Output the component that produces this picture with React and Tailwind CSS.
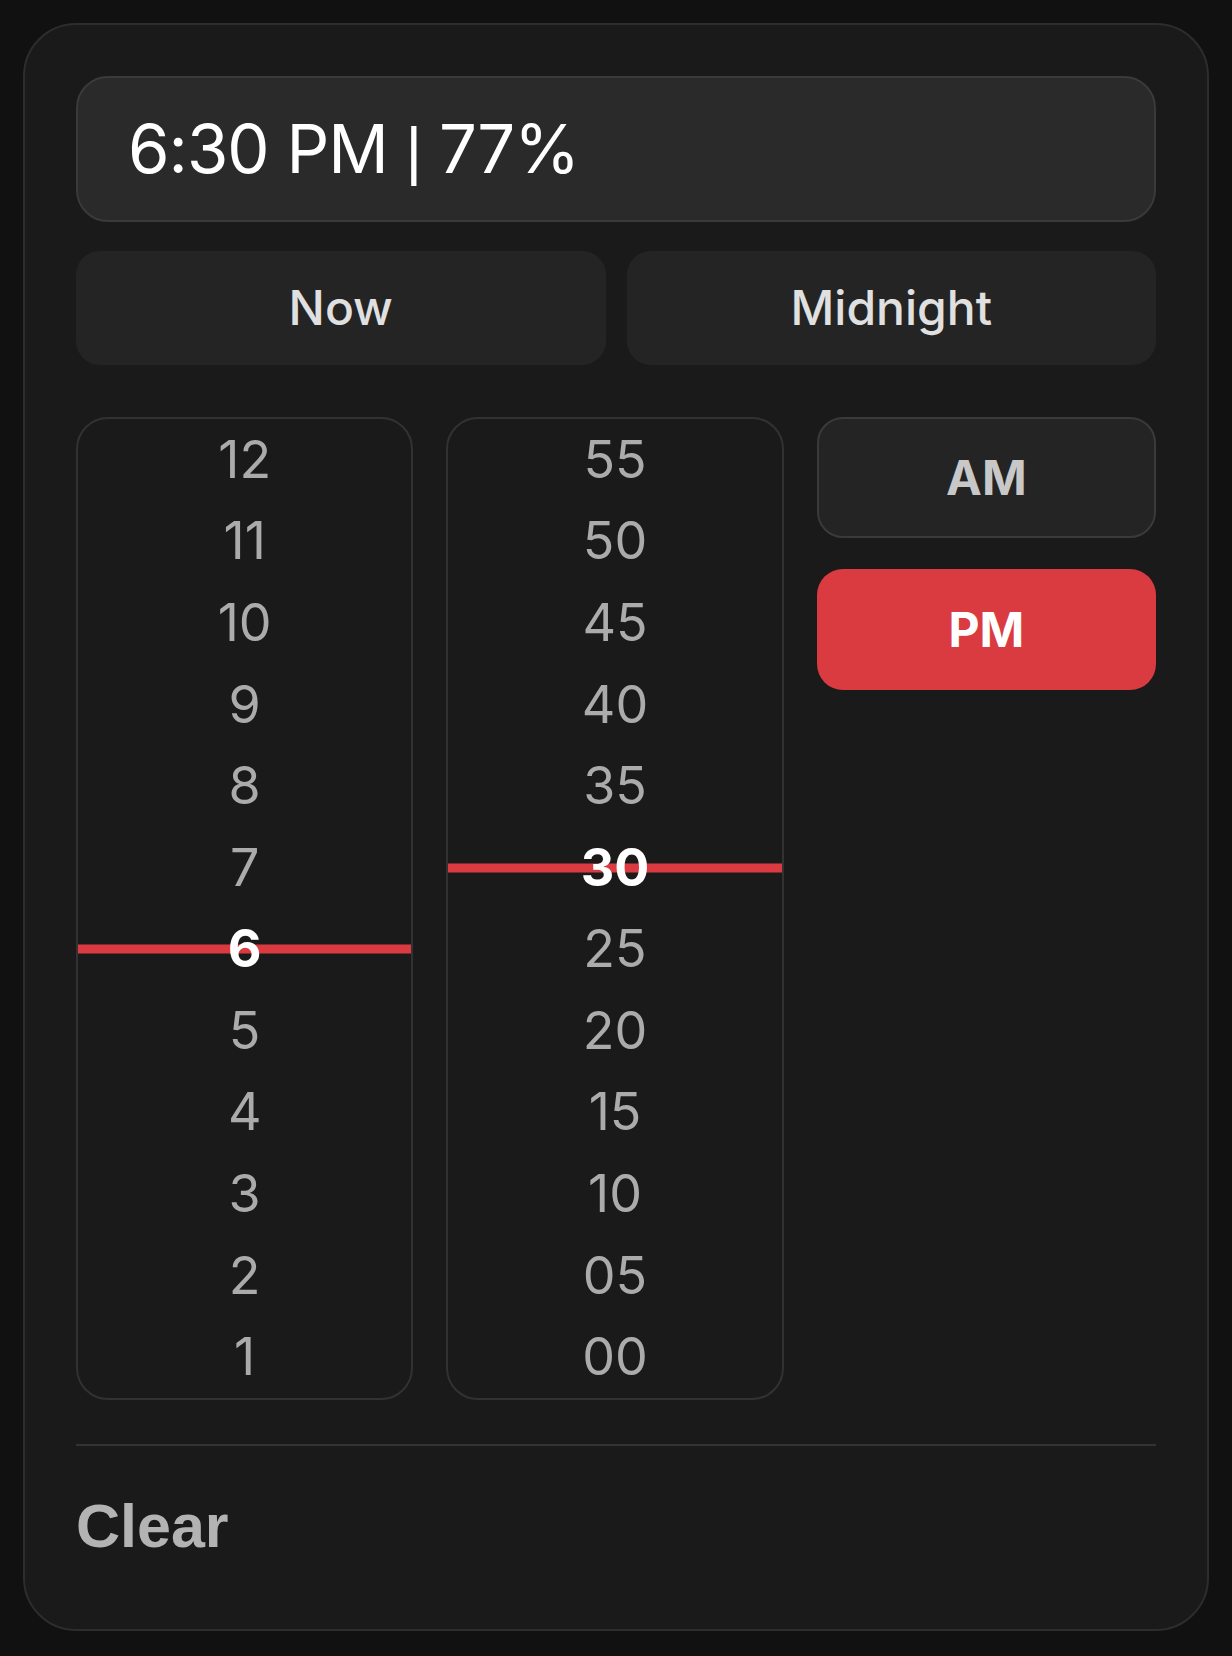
import React, { useState } from 'react';

const hours = [12, 11, 10, 9, 8, 7, 6, 5, 4, 3, 2, 1];
const minutes = ['55', '50', '45', '40', '35', '30', '25', '20', '15', '10', '05', '00'];

const Column = ({ items, selected, onPick }) => (
    <div className="w-[338px] h-[983px] border-2 border-[#323232] rounded-[32px] flex flex-col overflow-hidden">
        {items.map(v => {
            const active = v === selected;
            return (
                <button
                    key={v}
                    onClick={() => onPick(v)}
                    className="relative h-[81.58px] shrink-0 flex items-center justify-center"
                >
                    {active && <span className="absolute left-0 right-0 top-1/2 -translate-y-1/2 h-[9px] bg-[#dc3a41]" />}
                    <span className={`relative text-[52px] leading-none ${active ? 'font-bold text-white' : 'font-normal text-[#ababab]'}`}>
                        {v}
                    </span>
                </button>
            );
        })}
    </div>
);

const App = () => {
    const [hour, setHour] = useState(6);
    const [minute, setMinute] = useState('30');
    const [period, setPeriod] = useState('PM');

    return (
        <div className="min-h-[1656px] bg-[#111111] pt-[23px] pl-[23px] font-['Inter',sans-serif]">
            <div className="w-[1186px] h-[1608px] bg-[#1a1a1a] border-2 border-[#2d2d2d] rounded-[53px] px-[51px] pt-[51px]">
                {/* --- Valor actual --- */}
                <div className="h-[146px] bg-[#2a2a2a] border-2 border-[#3a3a3a] rounded-[32px] flex items-center pl-[50px]">
                    <span className="text-[67px] leading-none text-white font-normal tracking-[-1px]">
                        {hour}:{minute} {period} <span className="font-['Liberation_Sans',sans-serif] font-medium text-[64px]">|</span> 77%
                    </span>
                </div>

                {/* --- Atajos --- */}
                <div className="flex gap-[21px] mt-[29px]">
                    <button className="flex-1 h-[114px] bg-[#242424] rounded-[24px] text-[48px] font-medium text-[#e0e0e0]"
                        onClick={() => { setHour(6); setMinute('30'); setPeriod('PM'); }}>
                        Now
                    </button>
                    <button className="flex-1 h-[114px] bg-[#242424] rounded-[24px] text-[48px] font-medium text-[#e0e0e0]"
                        onClick={() => { setHour(12); setMinute('00'); setPeriod('AM'); }}>
                        Midnight
                    </button>
                </div>

                {/* --- Columnas --- */}
                <div className="flex gap-[33px] mt-[52px]">
                    <Column items={hours} selected={hour} onPick={setHour} />
                    <Column items={minutes} selected={minute} onPick={setMinute} />
                    <div className="w-[340px] flex flex-col gap-[31px]">
                        {['AM', 'PM'].map(p => (
                            <button
                                key={p}
                                onClick={() => setPeriod(p)}
                                className={`h-[121px] rounded-[26px] text-[48px] font-bold ${period === p ? 'bg-[#da3b41] text-white' : 'bg-[#242424] border-2 border-[#3a3a3a] text-[#c8c8c8]'}`}
                            >
                                {p}
                            </button>
                        ))}
                    </div>
                </div>

                <div className="h-[2px] bg-[#333333] mt-[44px]" />

                <button className="mt-[50px] block text-[61px] leading-[60px] font-bold text-[#b3b3b3] font-['Liberation_Sans',sans-serif]">
                    Clear
                </button>
            </div>
        </div>
    );
};

export default App;
